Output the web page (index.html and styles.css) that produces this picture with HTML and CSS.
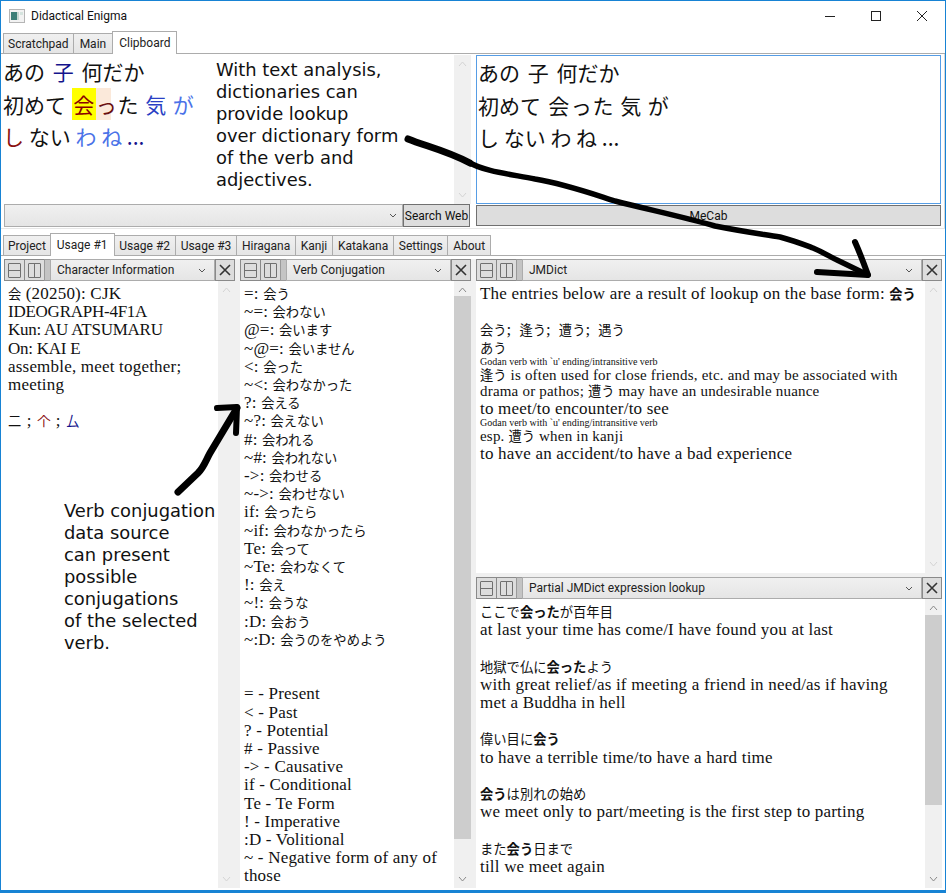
FILE: index.html
```html
<!DOCTYPE html>
<html lang="en">
<head>
  <meta charset="UTF-8" />
  <title>Didactical Enigma</title>
  <link rel="stylesheet" href="styles.css">
</head>
<body>
<div class="window">

  <header class="titlebar">
    <svg class="app-icon" width="16" height="14" viewBox="0 0 16 14">
      <rect x="0.5" y="0.5" width="15" height="13" fill="#f2f2f2" stroke="#b5b5b5"/>
      <rect x="2" y="3" width="6" height="8" fill="#3d7f78"/>
      <rect x="8" y="3" width="2" height="8" fill="#c6d8d2"/>
      <rect x="11" y="3" width="3" height="3" fill="#d5e3de"/>
    </svg>
    <span class="app-title">Didactical Enigma</span>
    <div class="win-buttons">
      <svg width="12" height="12" viewBox="0 0 12 12"><path d="M1 6.5h10" stroke="#222" fill="none"/></svg>
      <svg width="12" height="12" viewBox="0 0 12 12"><rect x="1.5" y="1.5" width="9" height="9" stroke="#222" fill="none"/></svg>
      <svg width="12" height="12" viewBox="0 0 12 12"><path d="M1 1l10 10M11 1L1 11" stroke="#222" fill="none"/></svg>
    </div>
  </header>

  <nav class="tabs top-tabs">
    <span class="tab">Scratchpad</span>
    <span class="tab tab-wide">Main</span>
    <span class="tab active">Clipboard</span>
  </nav>

  <section class="clipboard">
    <div class="clip-left">
      <div class="clip-text-row">
        <div class="jp-lines">
          <div class="jp-line">あの <span class="c-navy">子</span> 何だか</div>
          <div class="jp-line line-2">初めて <span class="hl-yellow">会</span><span class="hl-peach">っ</span> た <span class="c-blue">気</span> <span class="c-lblue">が</span></div>
          <div class="jp-line line-3"><span class="c-red">し</span> ない <span class="c-lblue">わ ね</span> <span class="c-navy">...</span></div>
        </div>
        <div class="scrollbar">
          <svg class="arrow" width="9" height="6" viewBox="0 0 9 6"><path d="M1 5l3.5-4L8 5" stroke="#d4d4d4" fill="none"/></svg>
          <svg class="arrow" width="9" height="6" viewBox="0 0 9 6"><path d="M1 1l3.5 4L8 1" stroke="#d4d4d4" fill="none"/></svg>
        </div>
      </div>
      <div class="search-row">
        <div class="search-combo">
          <svg width="8" height="5" viewBox="0 0 8 5"><path d="M1 1l3 3 3-3" stroke="#555" fill="none"/></svg>
        </div>
        <button class="btn search-btn">Search Web</button>
      </div>
    </div>
    <div class="clip-right">
      <div class="mecab-box">
        <div class="jp-line">あの 子 何だか</div>
        <div class="jp-line line-2">初めて <span class="plain-kai">会</span><span class="plain-tsu">っ</span> た 気 が</div>
        <div class="jp-line line-3">し ない わ ね ...</div>
      </div>
      <button class="btn mecab-btn">MeCab</button>
    </div>
  </section>

  <div class="splitter"></div>

  <nav class="tabs bottom-tabs">
    <span class="tab tab-tight">Project</span>
    <span class="tab active">Usage #1</span>
    <span class="tab">Usage #2</span>
    <span class="tab">Usage #3</span>
    <span class="tab">Hiragana</span>
    <span class="tab">Kanji</span>
    <span class="tab">Katakana</span>
    <span class="tab">Settings</span>
    <span class="tab">About</span>
  </nav>

  <main class="panels">

    <section class="panel">
      <div class="panel-bar">
        <span class="split-btn"><i class="split-h"></i></span>
        <span class="split-btn"><i class="split-v"></i></span>
        <span class="grip"></span>
        <span class="panel-select">Character Information<svg width="8" height="5" viewBox="0 0 8 5"><path d="M1 1l3 3 3-3" stroke="#555" fill="none"/></svg></span>
        <span class="close-btn"><svg width="12" height="12" viewBox="0 0 12 12"><path d="M1 1l10 10M11 1L1 11" stroke="#333" stroke-width="1.6" fill="none"/></svg></span>
      </div>
      <div class="panel-body">
        <div class="rich">
          <div><span class="ja">会</span> (20250): CJK</div>
          <div class="caps">IDEOGRAPH-4F1A</div>
          <div class="caps">Kun: AU ATSUMARU</div>
          <div class="caps">On: KAI E</div>
          <div>assemble, meet together;</div>
          <div>meeting</div>
          <div class="blank"></div>
          <div class="radicals"><span class="ja">二</span> ; <span class="ja c-red">个</span> ; <span class="ja c-navy">厶</span></div>
        </div>
        <div class="scrollbar">
          <svg class="arrow" width="9" height="6" viewBox="0 0 9 6"><path d="M1 5l3.5-4L8 5" stroke="#d4d4d4" fill="none"/></svg>
          <svg class="arrow" width="9" height="6" viewBox="0 0 9 6"><path d="M1 1l3.5 4L8 1" stroke="#d4d4d4" fill="none"/></svg>
        </div>
      </div>
    </section>

    <section class="panel">
      <div class="panel-bar">
        <span class="split-btn"><i class="split-h"></i></span>
        <span class="split-btn"><i class="split-v"></i></span>
        <span class="grip"></span>
        <span class="panel-select">Verb Conjugation<svg width="8" height="5" viewBox="0 0 8 5"><path d="M1 1l3 3 3-3" stroke="#555" fill="none"/></svg></span>
        <span class="close-btn"><svg width="12" height="12" viewBox="0 0 12 12"><path d="M1 1l10 10M11 1L1 11" stroke="#333" stroke-width="1.6" fill="none"/></svg></span>
      </div>
      <div class="panel-body">
        <div class="rich">
          <div>=: <span class="ja">会う</span></div>
          <div>~=: <span class="ja">会わない</span></div>
          <div>@=: <span class="ja">会います</span></div>
          <div>~@=: <span class="ja">会いません</span></div>
          <div>&lt;: <span class="ja">会った</span></div>
          <div>~&lt;: <span class="ja">会わなかった</span></div>
          <div>?: <span class="ja">会える</span></div>
          <div>~?: <span class="ja">会えない</span></div>
          <div>#: <span class="ja">会われる</span></div>
          <div>~#: <span class="ja">会われない</span></div>
          <div>-&gt;: <span class="ja">会わせる</span></div>
          <div>~-&gt;: <span class="ja">会わせない</span></div>
          <div>if: <span class="ja">会ったら</span></div>
          <div>~if: <span class="ja">会わなかったら</span></div>
          <div>Te: <span class="ja">会って</span></div>
          <div>~Te: <span class="ja">会わなくて</span></div>
          <div>!: <span class="ja">会え</span></div>
          <div>~!: <span class="ja">会うな</span></div>
          <div>:D: <span class="ja">会おう</span></div>
          <div>~:D: <span class="ja">会うのをやめよう</span></div>
          <div class="blank"></div>
          <div class="blank"></div>
          <div>= - Present</div>
          <div>&lt; - Past</div>
          <div>? - Potential</div>
          <div># - Passive</div>
          <div>-&gt; - Causative</div>
          <div>if - Conditional</div>
          <div>Te - Te Form</div>
          <div>! - Imperative</div>
          <div>:D - Volitional</div>
          <div>~ - Negative form of any of</div>
          <div>those</div>
          <div>@ - Polite form</div>
        </div>
        <div class="scrollbar">
          <svg class="arrow" width="9" height="6" viewBox="0 0 9 6"><path d="M1 5l3.5-4L8 5" stroke="#8a8a8a" fill="none"/></svg>
          <div class="thumb thumb-verb"></div>
          <svg class="arrow" width="9" height="6" viewBox="0 0 9 6"><path d="M1 1l3.5 4L8 1" stroke="#8a8a8a" fill="none"/></svg>
        </div>
      </div>
    </section>

    <div class="right-col">
      <section class="panel jmdict">
        <div class="panel-bar">
          <span class="split-btn"><i class="split-h"></i></span>
          <span class="split-btn"><i class="split-v"></i></span>
          <span class="grip"></span>
          <span class="panel-select">JMDict<svg width="8" height="5" viewBox="0 0 8 5"><path d="M1 1l3 3 3-3" stroke="#555" fill="none"/></svg></span>
          <span class="close-btn"><svg width="12" height="12" viewBox="0 0 12 12"><path d="M1 1l10 10M11 1L1 11" stroke="#333" stroke-width="1.6" fill="none"/></svg></span>
        </div>
        <div class="panel-body">
          <div class="rich">
            <div>The entries below are a result of lookup on the base form: <b>会う</b></div>
            <div class="blank"></div>
            <div class="jp-entry"><span class="ja">会う</span>;&nbsp; <span class="ja">逢う</span>;&nbsp; <span class="ja">遭う</span>;&nbsp; <span class="ja">遇う</span></div>
            <div class="jp-entry"><span class="ja">あう</span></div>
            <div class="pos">Godan verb with `u' ending/intransitive verb</div>
            <div class="note"><span class="ja">逢う</span> is often used for close friends, etc. and may be associated with</div>
            <div class="note">drama or pathos; <span class="ja">遭う</span> may have an undesirable nuance</div>
            <div class="gloss">to meet/to encounter/to see</div>
            <div class="pos">Godan verb with `u' ending/intransitive verb</div>
            <div class="note">esp. <span class="ja">遭う</span> when in kanji</div>
            <div class="gloss">to have an accident/to have a bad experience</div>
          </div>
          <div class="scrollbar">
            <svg class="arrow" width="9" height="6" viewBox="0 0 9 6"><path d="M1 5l3.5-4L8 5" stroke="#d4d4d4" fill="none"/></svg>
            <svg class="arrow" width="9" height="6" viewBox="0 0 9 6"><path d="M1 1l3.5 4L8 1" stroke="#d4d4d4" fill="none"/></svg>
          </div>
        </div>
      </section>

      <section class="panel partial">
        <div class="panel-bar">
          <span class="split-btn"><i class="split-h"></i></span>
          <span class="split-btn"><i class="split-v"></i></span>
          <span class="grip"></span>
          <span class="panel-select">Partial JMDict expression lookup<svg width="8" height="5" viewBox="0 0 8 5"><path d="M1 1l3 3 3-3" stroke="#555" fill="none"/></svg></span>
          <span class="close-btn"><svg width="12" height="12" viewBox="0 0 12 12"><path d="M1 1l10 10M11 1L1 11" stroke="#333" stroke-width="1.6" fill="none"/></svg></span>
        </div>
        <div class="panel-body">
          <div class="rich">
            <div><span class="ja">ここで</span><b>会った</b><span class="ja">が百年目</span></div>
            <div>at last your time has come/I have found you at last</div>
            <div class="blank"></div>
            <div><span class="ja">地獄で仏に</span><b>会った</b><span class="ja">よう</span></div>
            <div>with great relief/as if meeting a friend in need/as if having</div>
            <div>met a Buddha in hell</div>
            <div class="blank"></div>
            <div><span class="ja">偉い目に</span><b>会う</b></div>
            <div>to have a terrible time/to have a hard time</div>
            <div class="blank"></div>
            <div><b>会う</b><span class="ja">は別れの始め</span></div>
            <div>we meet only to part/meeting is the first step to parting</div>
            <div class="blank"></div>
            <div><span class="ja">また</span><b>会う</b><span class="ja">日まで</span></div>
            <div>till we meet again</div>
          </div>
          <div class="scrollbar">
            <svg class="arrow" width="9" height="6" viewBox="0 0 9 6"><path d="M1 5l3.5-4L8 5" stroke="#8a8a8a" fill="none"/></svg>
            <div class="thumb thumb-partial"></div>
            <svg class="arrow" width="9" height="6" viewBox="0 0 9 6"><path d="M1 1l3.5 4L8 1" stroke="#8a8a8a" fill="none"/></svg>
          </div>
        </div>
      </section>
    </div>
  </main>

  <!-- annotations drawn on top of the screenshot -->
  <div class="note-text note-top">With text analysis,<br>dictionaries can<br>provide lookup<br>over dictionary form<br>of the verb and<br>adjectives.</div>
  <div class="note-text note-verb">Verb conjugation<br>data source<br>can present<br>possible<br>conjugations<br>of the selected<br>verb.</div>
  <svg class="ink" width="946" height="893" viewBox="0 0 946 893">
    <g fill="none" stroke="#000" stroke-linecap="round" stroke-linejoin="round">
      <path stroke-width="7" d="M408 139C425 146 445 150 470 163"/>
      <path stroke-width="5.5" d="M466 161C485 172 510 174 535 179C565 184 590 193 615 201C650 210 680 216 715 226C745 232 762 234 780 237C795 241 805 245 813 248C825 253 830 257 837 260L868 275"/>
      <path stroke-width="6" d="M855 242C860 253 864 264 868 275L817 272"/>
      <path stroke-width="7" d="M178 492L198 473C204 467 206 460 210 453L222 433L237 408"/>
      <path stroke-width="6" d="M217 408L237 407L236 433"/>
    </g>
  </svg>
</div>
</body>
</html>
```

FILE: styles.css
```css
* {
  box-sizing: border-box;
}

html, body {
  margin: 0;
  padding: 0;
  background: #fff;
}

.window {
  position: relative;
  width: 946px;
  height: 893px;
  border: 1px solid #1783d4;
  border-width: 1px 1px 3px 1px;
  display: flex;
  flex-direction: column;
  overflow: hidden;
  font-family: Roboto, "Noto Sans", sans-serif;
  font-size: 12px;
  color: #111;
}

.titlebar {
  height: 29px;
  flex: none;
  display: flex;
  align-items: center;
  padding-left: 8px;
}

.app-icon {
  margin-right: 6px;
}

.app-title {
  font-size: 12px;
}

.win-buttons {
  margin-left: auto;
  display: flex;
  gap: 34px;
  padding-right: 17px;
}

/* tabs */
.tabs {
  display: flex;
  flex: none;
  align-items: flex-end;
  border-bottom: 1px solid #acacac;
  padding-left: 2px;
}

.tab {
  height: 20px;
  display: flex;
  align-items: center;
  justify-content: center;
  padding: 0 4px;
  background: linear-gradient(#f0f0f0, #e5e5e5);
  border: 1px solid #acacac;
  border-bottom: none;
  margin-right: -1px;
  color: #222;
}

.bottom-tabs .tab {
  padding: 0 4.8px;
}

.bottom-tabs .tab-tight {
  padding: 0 4px;
}

.tab-wide {
  padding: 0 6px;
}

.tabs .tab.active {
  height: 23px;
  background: #fff;
  padding: 0 6px;
  margin-bottom: -1px;
  position: relative;
  z-index: 1;
}

.top-tabs {
  height: 24px;
}

.bottom-tabs {
  height: 23px;
}

/* clipboard area */
.clipboard {
  height: 175px;
  flex: none;
  display: flex;
  padding: 1px 3px 0 1px;
  border-bottom: 1px solid #e6e6e6;
  border-right: 1px solid #d8d8d8;
}

.clip-left {
  width: 469px;
  display: flex;
  flex-direction: column;
}

.clip-text-row {
  height: 149px;
  display: flex;
}

.jp-lines {
  flex: 1;
  padding: 0 0 0 1px;
}

.jp-line {
  font-family: "Noto Sans CJK JP", sans-serif;
  font-size: 21px;
  line-height: 32.5px;
  word-spacing: 3px;
  white-space: nowrap;
}

.line-2 {
  word-spacing: 2px;
}

.line-3 {
  word-spacing: 0;
}

.hl-yellow, .hl-peach, .plain-kai, .plain-tsu {
  display: inline-block;
  height: 32px;
  line-height: 32px;
  text-align: center;
  vertical-align: top;
}

.hl-yellow, .plain-kai {
  width: 24px;
  margin-left: -1px;
}

.hl-peach, .plain-tsu {
  width: 15px;
}

.hl-yellow {
  background: #ffff00;
  color: #8a0000;
}

.hl-peach {
  background: #fbe9da;
  color: #6a1010;
}

.c-navy { color: #14148c; }
.c-blue { color: #2a3fc4; }
.c-lblue { color: #4a72e8; }
.c-red { color: #8a1010; }

.scrollbar {
  width: 17px;
  flex: none;
  background: #f0f0f0;
  display: flex;
  flex-direction: column;
  align-items: center;
  justify-content: space-between;
  padding: 6px 0;
}

.thumb {
  width: 17px;
  background: #cdcdcd;
}

.thumb-verb {
  flex: 1;
  margin: 3px 0 37px;
}

.thumb-partial {
  flex: 1;
  margin: 4px 0 71px;
}

.search-row {
  height: 23px;
  display: flex;
  padding: 0 1px 0 2px;
}

.search-combo {
  flex: 1;
  background: linear-gradient(#f0f0f0, #e5e5e5);
  border: 1px solid #acacac;
  display: flex;
  align-items: center;
  justify-content: flex-end;
  padding-right: 5px;
}

.btn {
  font-family: inherit;
  font-size: 12px;
  background: #dddddd;
  border: 1px solid #707070;
  color: #111;
  padding: 0;
  white-space: nowrap;
}

.search-btn {
  width: 67px;
}

.clip-right {
  flex: 1;
  display: flex;
  flex-direction: column;
  padding-left: 5px;
}

.mecab-box {
  height: 149px;
  border: 1px solid #569de5;
  padding: 0 0 0 1px;
}

.mecab-btn {
  height: 21px;
  margin-top: 1px;
}

.splitter {
  height: 4px;
  flex: none;
  background: #fff;
}

/* panels */
.panels {
  flex: 1;
  min-height: 0;
  display: grid;
  grid-template-columns: 231px 231px 1fr;
  gap: 5px;
  margin: 3px 3px 2px 3px;
  background: #f0f0f0;
}

.right-col {
  display: flex;
  flex-direction: column;
  gap: 4px;
  min-height: 0;
}

.panel {
  display: flex;
  flex-direction: column;
  min-height: 0;
  overflow: hidden;
}

.jmdict {
  height: 314px;
  flex: none;
}

.partial {
  flex: 1;
}

.panel-bar {
  height: 22px;
  flex: none;
  display: flex;
  font-size: 12px;
  background: #fff;
}

.split-btn {
  width: 21px;
  background: #dddddd;
  border: 1px solid #8a8a8a;
  margin-right: -1px;
  display: flex;
  align-items: center;
  justify-content: center;
}

.split-btn i {
  display: block;
  width: 13px;
  height: 15px;
  border: 1px solid #707070;
  border-radius: 1px;
}

.split-h {
  background: linear-gradient(#707070, #707070) center / 100% 1px no-repeat;
}

.split-v {
  background: linear-gradient(#707070, #707070) center / 1px 100% no-repeat;
}

.grip {
  width: 7px;
  background: #c4c4c4;
  border: 1px solid #9a9a9a;
  margin-right: -1px;
}

.panel-select {
  flex: 1;
  display: flex;
  align-items: center;
  justify-content: space-between;
  padding: 0 8px 0 6px;
  background: linear-gradient(#f0f0f0, #e5e5e5);
  border: 1px solid #acacac;
  color: #222;
}

.close-btn {
  width: 20px;
  background: #dddddd;
  border: 1px solid #8a8a8a;
  display: flex;
  align-items: center;
  justify-content: center;
}

.panel-body {
  flex: 1;
  min-height: 0;
  display: flex;
}

.rich {
  flex: 1;
  min-width: 0;
  overflow: hidden;
  padding: 4px 0 0 4px;
  background: #fff;
  font-family: "Liberation Serif", "Noto Sans CJK JP", serif;
  font-size: 17px;
  letter-spacing: 0.2px;
  line-height: 18.2px;
  color: #111;
}

.rich .blank {
  height: 18.2px;
}

.rich .ja, .rich b {
  font-family: "Noto Sans CJK JP", sans-serif;
  font-size: 13.3px;
  letter-spacing: 0;
  line-height: 1;
}

.rich b {
  font-weight: 700;
}

.caps {
  letter-spacing: -0.25px;
}

.radicals {
  word-spacing: 1px;
}

.jp-entry {
  line-height: 18px;
  word-spacing: -0.5px;
}

.pos {
  font-size: 10px;
  letter-spacing: 0;
  line-height: 10px;
}

.note {
  font-size: 15px;
  line-height: 16px;
}

.gloss {
  line-height: 19px;
}

/* annotations */
.note-text {
  position: absolute;
  font-family: "DejaVu Sans", sans-serif;
  font-size: 17.9px;
  line-height: 22px;
  color: #111;
  white-space: nowrap;
}

.note-top {
  left: 215px;
  top: 58px;
}

.note-verb {
  left: 63px;
  top: 499px;
}

.ink {
  position: absolute;
  left: -1px;
  top: -1px;
  pointer-events: none;
}
```
